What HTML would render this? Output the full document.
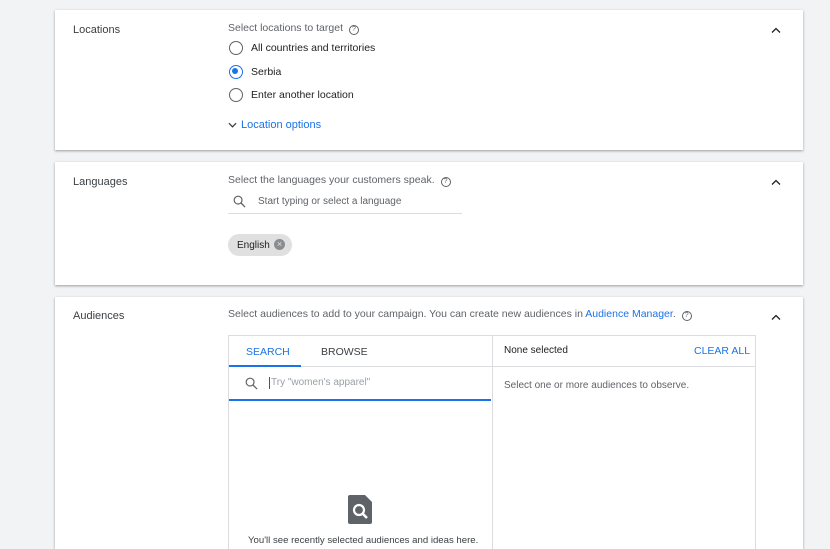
<!DOCTYPE html>
<html style="overflow:hidden;height:549px"><head><meta charset="utf-8"><style>
*{margin:0;padding:0;box-sizing:border-box}
body{width:830px;height:549px;background:#f1f3f4;font-family:"Liberation Sans",sans-serif;color:#202124;position:relative;overflow:hidden;font-size:10.5px}
.card{position:absolute;left:55px;width:748px;background:#fff;box-shadow:0 1px 2px rgba(60,64,67,.35),0 1px 3px rgba(60,64,67,.15)}
.abs{position:absolute;white-space:nowrap}
.title{left:18px;font-size:11px;color:#3c4043}
.grey{color:#5f6368}
.chev{position:absolute;right:22px;width:10px;height:6px}
.radio{position:absolute;width:14px;height:14px;border:1.6px solid #5f6368;border-radius:50%}
.radio.on{border-color:#1a73e8}
.radio.on::after{content:"";position:absolute;left:2.4px;top:2.4px;width:6px;height:6px;border-radius:50%;background:#1a73e8}
.q{display:inline-block;width:10px;height:10px;border:1.1px solid #5f6368;border-radius:50%;font-size:7px;line-height:8px;text-align:center;vertical-align:0;margin-left:6px;color:#5f6368}
.blue{color:#1a73e8}
</style></head><body>
<svg width="0" height="0" style="position:absolute"><defs>
<symbol id="up" viewBox="0 0 10 6"><path d="M1 5.5L5 1.5L9 5.5" fill="none" stroke="#202124" stroke-width="1.3"/></symbol>
<symbol id="mag" viewBox="0 0 14 14"><circle cx="5.5" cy="5.5" r="4.2" fill="none" stroke="#5f6368" stroke-width="1.3"/><path d="M8.6 8.6L13 13" stroke="#5f6368" stroke-width="1.4"/></symbol>
</defs></svg>

<div class="card" style="top:10px;height:140px">
<div class="abs title" style="top:14px">Locations</div>
<div class="abs grey" style="left:173px;top:12px">Select locations to target<span class="q">?</span></div>
<div class="radio" style="left:174px;top:31px"></div><div class="abs" style="left:196px;top:32px">All countries and territories</div>
<div class="radio on" style="left:174px;top:55px"></div><div class="abs" style="left:196px;top:56px">Serbia</div>
<div class="radio" style="left:174px;top:78px"></div><div class="abs" style="left:196px;top:79px">Enter another location</div>
<svg class="abs" style="left:173px;top:112px" width="9" height="6" viewBox="0 0 10 6"><path d="M1 1L5 5L9 1" fill="none" stroke="#3c4043" stroke-width="1.4"/></svg>
<div class="abs blue" style="left:186px;top:109px;font-size:11px">Location options</div>
<svg class="chev" style="top:17px"><use href="#up"/></svg>
</div>

<div class="card" style="top:162px;height:123px">
<div class="abs title" style="top:14px">Languages</div>
<div class="abs grey" style="left:173px;top:12px">Select the languages your customers speak.<span class="q">?</span></div>
<svg class="abs" style="left:178px;top:33px" width="13" height="13"><use href="#mag"/></svg>
<div class="abs grey" style="left:203px;top:34px;font-size:10px">Start typing or select a language</div>
<div class="abs" style="left:173px;top:51px;width:234px;border-top:1px solid #dadce0"></div>
<div class="abs" style="left:173px;top:72px;width:64px;height:22px;border-radius:11px;background:#e0e0e0;padding:6px 0 0 9px;font-size:10px">English<span style="position:absolute;left:46px;top:5px;width:11px;height:11px;border-radius:50%;background:#8a8d90;color:#e0e0e0;font-size:9px;line-height:11px;text-align:center">×</span></div>
<svg class="chev" style="top:17px"><use href="#up"/></svg>
</div>

<div class="card" style="top:297px;height:252px;overflow:hidden">
<div class="abs title" style="top:13px">Audiences</div>
<div class="abs grey" style="left:173px;top:11px">Select audiences to add to your campaign. You can create new audiences in <span class="blue">Audience Manager</span>.<span class="q">?</span></div>
<svg class="chev" style="top:17px"><use href="#up"/></svg>
<div class="abs" style="left:173px;top:38px;width:528px;height:230px;border:1px solid #dadce0"></div>
<div class="abs" style="left:437px;top:38px;height:230px;border-left:1px solid #dadce0"></div>
<div class="abs" style="left:174px;top:69px;width:263px;border-top:1px solid #dadce0"></div>
<div class="abs" style="left:438px;top:69px;width:263px;border-top:1px solid #dadce0"></div>
<div class="abs" style="left:174px;top:68px;width:72px;height:2px;background:#1a73e8"></div>
<div class="abs blue" style="left:191px;top:49px;font-size:10.5px">SEARCH</div>
<div class="abs" style="left:266px;top:49px;font-size:10.5px;color:#3c4043">BROWSE</div>
<div class="abs" style="left:449px;top:48px;font-size:10px">None selected</div>
<div class="abs blue" style="left:639px;top:48px;font-size:10.5px">CLEAR ALL</div>
<svg class="abs" style="left:190px;top:80px" width="13" height="13"><use href="#mag"/></svg>
<div class="abs" style="left:214px;top:80px;width:1px;height:12px;background:#555"></div>
<div class="abs grey" style="left:216px;top:80px;font-size:10px;color:#9aa0a6">Try "women's apparel"</div>
<div class="abs" style="left:174px;top:102px;width:262px;height:1.5px;background:#1a73e8"></div>
<div class="abs grey" style="left:449px;top:83px;font-size:10px">Select one or more audiences to observe.</div>
<svg class="abs" style="left:293px;top:198px" width="24" height="30" viewBox="0 0 24 30"><path d="M2 0H17L24 7V27a2 2 0 0 1-2 2H2a2 2 0 0 1-2-2V2a2 2 0 0 1 2-2z" fill="#5f6368"/><circle cx="11" cy="15" r="5" fill="none" stroke="#fff" stroke-width="2.2"/><path d="M14.5 18.5L19 23" stroke="#fff" stroke-width="2.5"/></svg>
<div class="abs" style="left:193px;top:238px;font-size:9.6px;color:#3c4043">You'll see recently selected audiences and ideas here.</div>
</div>
</body></html>
